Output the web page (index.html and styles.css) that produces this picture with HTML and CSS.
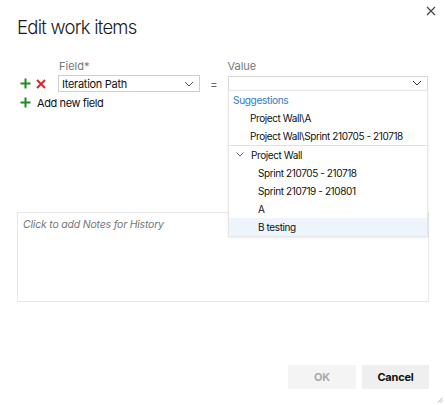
FILE: index.html
```html
<!DOCTYPE html>
<html>
<head>
<meta charset="utf-8">
<link rel="stylesheet" href="styles.css">
</head>
<body>
<div class="dialog">
  <div class="header">
    <h1 class="title">Edit work items</h1>
    <button class="close" aria-label="Close">
      <svg width="10" height="10" viewBox="0 0 10 10"><path d="M1 1L9 9M9 1L1 9" stroke="#444" stroke-width="1.2"/></svg>
    </button>
  </div>

  <div class="fields">
    <div class="labels">
      <span class="label field-label">Field*</span>
      <span class="label value-label">Value</span>
    </div>
    <div class="row">
      <div class="row-icons">
        <svg class="icon-plus" width="11" height="11" viewBox="0 0 11 11"><path d="M5.5 0.5V10.5M0.5 5.5H10.5" stroke="#1f8a1f" stroke-width="2"/></svg>
        <svg class="icon-x" width="10" height="10" viewBox="0 0 10 10"><path d="M1 1L9 9M9 1L1 9" stroke="#e0201c" stroke-width="1.8"/></svg>
      </div>
      <div class="select">
        <span>Iteration Path</span>
        <svg width="10" height="6" viewBox="0 0 10 6"><path d="M1 1L5 5L9 1" fill="none" stroke="#555" stroke-width="1"/></svg>
      </div>
      <span class="eq">=</span>
      <div class="value-wrap">
        <div class="select value">
          <span></span>
          <svg width="10" height="6" viewBox="0 0 10 6"><path d="M1 1L5 5L9 1" fill="none" stroke="#333" stroke-width="1"/></svg>
        </div>
        <div class="menu">
          <div class="menu-section">
            <div class="item heading">Suggestions</div>
            <div class="item lvl1">Project Wall\A</div>
            <div class="item lvl1">Project Wall\Sprint 210705 - 210718</div>
          </div>
          <div class="menu-section tree">
            <div class="item tree-root">
              <svg width="8" height="5" viewBox="0 0 8 5"><path d="M0.5 0.5L4 4L7.5 0.5" fill="none" stroke="#666" stroke-width="1"/></svg>
              <span>Project Wall</span>
            </div>
            <div class="item lvl2">Sprint 210705 - 210718</div>
            <div class="item lvl2">Sprint 210719 - 210801</div>
            <div class="item lvl2">A</div>
            <div class="item lvl2 active">B testing</div>
          </div>
        </div>
      </div>
    </div>
    <div class="add-row">
      <svg class="icon-plus" width="11" height="11" viewBox="0 0 11 11"><path d="M5.5 0.5V10.5M0.5 5.5H10.5" stroke="#1f8a1f" stroke-width="2"/></svg>
      <span>Add new field</span>
    </div>
  </div>

  <div class="notes">Click to add Notes for History</div>

  <div class="footer">
    <button class="btn ok">OK</button>
    <button class="btn cancel">Cancel</button>
  </div>
  <svg class="grip" width="6" height="6" viewBox="0 0 6 6"><path d="M5.5 1L1 5.5M5.5 3.5L3.5 5.5" stroke="#999" stroke-width="0.8"/></svg>
</div>
</body>
</html>
```

FILE: styles.css
```css
* { box-sizing: border-box; }
html, body { margin: 0; padding: 0; }
body {
  width: 445px;
  height: 405px;
  background: #fff;
  font-family: Inter, "Noto Sans", "Liberation Sans", sans-serif;
  color: #222;
  overflow: hidden;
}
.dialog {
  position: relative;
  width: 445px;
  height: 405px;
  padding: 0 16px 0 17px;
}
.header {
  display: flex;
  justify-content: space-between;
  align-items: flex-start;
  height: 58px;
}
.title {
  margin: 15px 0 0 0;
  font-size: 18.5px;
  line-height: 24px;
  font-weight: 300;
  letter-spacing: -0.75px;
  color: #1a1a1a;
}
.close {
  margin: 6px -7px 0 0;
  padding: 0;
  width: 10px;
  height: 10px;
  border: 0;
  background: none;
  display: flex;
}
.fields { position: relative; }
.labels {
  display: flex;
  height: 17px;
  font-size: 11px;
  color: #777;
  line-height: 16px;
}
.field-label { margin-left: 42px; }
.value-label { margin-left: 138px; }
.row {
  display: flex;
  align-items: center;
  height: 17px;
}
.row-icons {
  display: flex;
  align-items: center;
  width: 41px;
  padding-left: 3px;
  gap: 5px;
}
.select {
  display: flex;
  align-items: center;
  justify-content: space-between;
  width: 142px;
  height: 17px;
  border: 1px solid #cfcfcf;
  padding: 0 5px 0 3px;
  font-size: 11px;
  letter-spacing: -0.3px;
  color: #111;
}
.eq {
  width: 28px;
  text-align: center;
  font-size: 11px;
  color: #666;
  padding-top: 1px;
}
.value-wrap {
  position: relative;
  width: 200px;
}
.select.value {
  width: 200px;
  height: 15px;
  margin-top: -1px;
  border-color: #d8d8d8;
}
.menu {
  position: absolute;
  left: 0;
  top: 13px;
  width: 200px;
  background: #fff;
  border: 1px solid #e6e6e6;
  box-shadow: 0 1px 3px rgba(0,0,0,0.08);
  z-index: 2;
  font-size: 10px;
  letter-spacing: -0.4px;
  color: #111;
}
.menu-section.tree { border-top: 1px solid #e0e0e0; }
.item {
  height: 18px;
  line-height: 18px;
  white-space: nowrap;
}
.heading { color: #2f7bc7; padding-left: 4px; font-size: 10.2px; }
.lvl1 { padding-left: 21px; }
.lvl2 { padding-left: 29px; }
.tree-root {
  display: flex;
  align-items: center;
  padding-left: 7px;
  gap: 7px;
}
.active { background: #edf4fb; }
.add-row {
  display: flex;
  align-items: center;
  gap: 6px;
  height: 17px;
  margin-top: 2px;
  padding-left: 3px;
  font-size: 11px;
  letter-spacing: -0.4px;
  color: #111;
}
.notes {
  margin-top: 101px;
  height: 90px;
  border: 1px solid #e8e8e8;
  padding: 5px 5px;
  font-size: 10.5px;
  letter-spacing: -0.2px;
  font-style: italic;
  color: #777;
}
.footer {
  display: flex;
  justify-content: flex-end;
  gap: 6px;
  margin-top: 63px;
  padding-right: 0;
}
.btn {
  height: 24px;
  border: 0;
  font-family: inherit;
  font-size: 11px;
  letter-spacing: -0.2px;
  font-weight: 700;
}
.ok { width: 68px; background: #f4f4f4; color: #aaa; }
.cancel { width: 67px; background: #efefef; color: #111; }
.grip { position: absolute; right: 2px; bottom: 2px; }
```
